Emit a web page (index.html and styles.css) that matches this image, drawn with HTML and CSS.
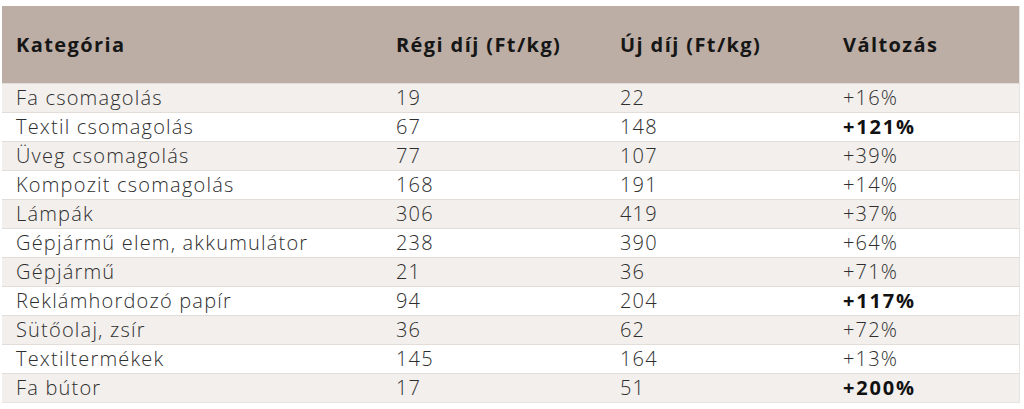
FILE: index.html
```html
<!DOCTYPE html>
<html lang="hu">
<head>
<meta charset="utf-8">
<link rel="stylesheet" href="styles.css">
</head>
<body>
<table class="fees">
  <colgroup>
    <col class="c1"><col class="c2"><col class="c3"><col class="c4">
  </colgroup>
  <thead>
    <tr><th>Kategória</th><th>Régi díj (Ft/kg)</th><th>Új díj (Ft/kg)</th><th>Változás</th></tr>
  </thead>
  <tbody>
    <tr><td>Fa csomagolás</td><td>19</td><td>22</td><td>+16%</td></tr>
    <tr><td>Textil csomagolás</td><td>67</td><td>148</td><td class="hi">+121%</td></tr>
    <tr><td>Üveg csomagolás</td><td>77</td><td>107</td><td>+39%</td></tr>
    <tr><td>Kompozit csomagolás</td><td>168</td><td>191</td><td>+14%</td></tr>
    <tr><td>Lámpák</td><td>306</td><td>419</td><td>+37%</td></tr>
    <tr><td>Gépjármű elem, akkumulátor</td><td>238</td><td>390</td><td>+64%</td></tr>
    <tr><td>Gépjármű</td><td>21</td><td>36</td><td>+71%</td></tr>
    <tr><td>Reklámhordozó papír</td><td>94</td><td>204</td><td class="hi">+117%</td></tr>
    <tr><td>Sütőolaj, zsír</td><td>36</td><td>62</td><td>+72%</td></tr>
    <tr><td>Textiltermékek</td><td>145</td><td>164</td><td>+13%</td></tr>
    <tr><td>Fa bútor</td><td>17</td><td>51</td><td class="hi">+200%</td></tr>
  </tbody>
</table>
</body>
</html>
```
FILE: styles.css
```css
html, body { margin: 0; padding: 0; background: #fff; }
body { padding: 6px 0 0 2px; }
.fees {
  width: 1017px;
  border-collapse: collapse;
  table-layout: fixed;
  border-right: 1px solid #e8e4e1;
  border-bottom: 1px solid #e8e4e1;
}
.c1 { width: 380px; }
.c2 { width: 224px; }
.c3 { width: 223px; }
.c4 { width: 190px; }
.fees th {
  background: #bcaea5;
  height: 77px;
  padding: 0 0 0 14px;
  text-align: left;
  font-family: "Open Sans", sans-serif;
  font-weight: 700;
  font-size: 20px;
  letter-spacing: 1.4px;
  color: #161616;
}
.fees td {
  height: 28px;
  padding: 0 0 0 14px;
  font-family: "Open Sans", sans-serif;
  font-weight: 300;
  font-size: 20px;
  letter-spacing: 1.2px;
  color: #2e2e2e;
  border-top: 1px solid #e2ddd9;
  line-height: 28px;
}
.fees tbody tr:nth-child(odd) td { background: #f2efec; }
.fees td.hi { font-weight: 700; letter-spacing: 1.8px; color: #111; }
```
